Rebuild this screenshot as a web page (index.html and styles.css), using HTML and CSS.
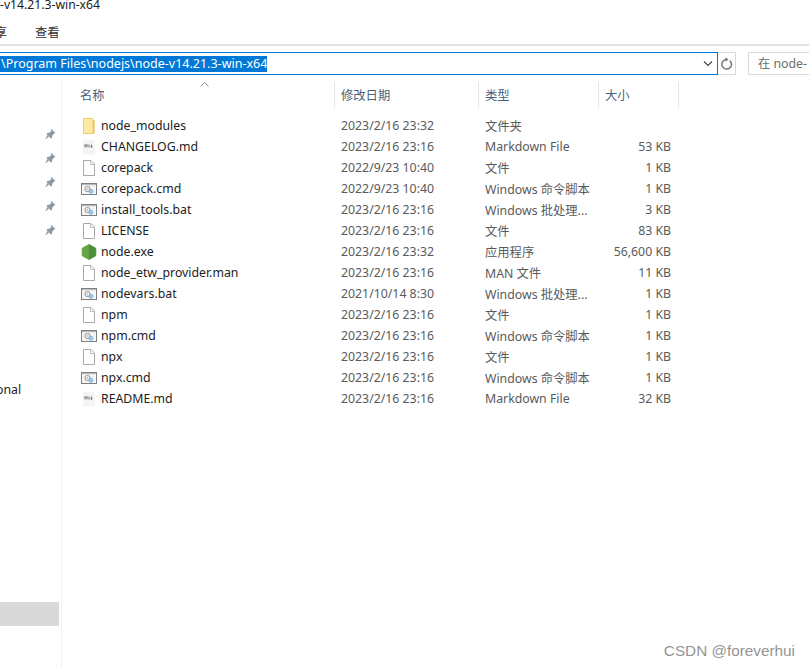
FILE: index.html
```html
<!DOCTYPE html>
<html lang="zh-CN">
<head>
  <meta charset="utf-8">
  <title>node-v14.21.3-win-x64</title>
  <link rel="stylesheet" href="styles.css">
</head>
<body>

<svg class="defs" width="0" height="0">
  <symbol id="i-folder" viewBox="0 0 16 16">
    <path d="M2.500 .5h9l1.500 1.500v13.500h-10.500z" fill="#fde9a2" stroke="#eccf6e"/>
    <path d="M12.500 2v13" stroke="#e6c04f" stroke-width="1.500"/>
  </symbol>
  <symbol id="i-file" viewBox="0 0 16 16">
    <path d="M2.500 .5h7.500l3.500 3.500v11.500h-11z" fill="#fff" stroke="#a9a9a9"/>
    <path d="M9.500 .5v4h4" fill="none" stroke="#bdbdbd"/>
  </symbol>
  <symbol id="i-md" viewBox="0 0 16 16">
    <path d="M2 .5h10l2 2v13h-12z" fill="#f4f4f4"/>
    <path d="M4 8.500v-3l1 1.500 1-1.500v3M8 5.500v3M10.500 5.500v3M9.500 7.500l1 1 1-1" fill="none" stroke="#777"/>
  </symbol>
  <symbol id="i-bat" viewBox="0 0 16 16">
    <rect x=".5" y="2.500" width="15" height="11" fill="#f6f6f6" stroke="#808080"/>
    <path d="M1 3h14v1.200h-14z" fill="#b9b9b9"/>
    <circle cx="6.500" cy="8" r="2.500" fill="none" stroke="#a5a5a5" stroke-width="1.200"/>
    <circle cx="6.500" cy="8" r=".8" fill="#a5a5a5"/>
    <circle cx="10" cy="10.300" r="2" fill="#9fcdee" stroke="#6aa8d6" stroke-width=".7"/>
  </symbol>
  <symbol id="i-node" viewBox="0 0 16 16">
    <path d="M8 .5l6.800 3.800v7.400l-6.800 3.800-6.800-3.800v-7.400z" fill="#66a548" stroke="#66a548" stroke-linejoin="round"/>
    <path d="M8 .5l6.800 3.800v7.400l-6.800 3.800z" fill="#4a8f39"/>
  </symbol>
  <symbol id="i-pin" viewBox="0 0 12 12">
    <path d="M7 .5l4.500 4.500-1.300.6-2 2.100-.2 2.300-1 .5-4.500-4.500.5-1 2.300-.2 2.100-2z" fill="#8d99a3"/>
    <path d="M3.500 7l1.500 1.500-4.200 3.200z" fill="#8d99a3"/>
  </symbol>
</svg>

<div class="title">-v14.21.3-win-x64</div>

<div class="tabs">
  <span class="tab-share">享</span>
  <span class="tab">查看</span>
</div>

<div class="addr-row">
  <div class="addr">
    <span class="selected">\Program Files\nodejs\node-v14.21.3-win-x64</span>
    <svg class="chev" width="10" height="6" viewBox="0 0 10 6"><path d="M1 .5l4 4 4-4" fill="none" stroke="#444" stroke-width="1.200"/></svg>
  </div>
  <div class="refresh">
    <svg width="12" height="14" viewBox="0 0 12 14"><path d="M8.800 3.600a4.800 4.800 0 1 1-3.500-1.100" fill="none" stroke="#777" stroke-width="1.500"/><path d="M4.500 .3v4.500l3-2.200z" fill="#777"/></svg>
  </div>
  <div class="search">在 node-</div>
</div>

<div class="content">
  <div class="side">
    <div class="pins">
      <svg class="pin"><use href="#i-pin"/></svg>
      <svg class="pin"><use href="#i-pin"/></svg>
      <svg class="pin"><use href="#i-pin"/></svg>
      <svg class="pin"><use href="#i-pin"/></svg>
      <svg class="pin"><use href="#i-pin"/></svg>
    </div>
    <div class="side-label">onal</div>
    <div class="side-sel"></div>
  </div>

  <div class="main">
    <div class="sort"><svg width="9" height="5" viewBox="0 0 9 5"><path d="M.5 4.500l4-4 4 4" fill="none" stroke="#8a8a8a"/></svg></div>
    <div class="head">
      <div class="hcol c-name">名称</div>
      <div class="hcol c-date">修改日期</div>
      <div class="hcol c-type">类型</div>
      <div class="hcol c-size">大小</div>
    </div>

    <div class="row"><svg class="ico"><use href="#i-folder"/></svg><span class="c-name name">node_modules</span><span class="c-date">2023/2/16 23:32</span><span class="c-type">文件夹</span><span class="c-size"></span></div>
    <div class="row"><svg class="ico"><use href="#i-md"/></svg><span class="c-name name">CHANGELOG.md</span><span class="c-date">2023/2/16 23:16</span><span class="c-type">Markdown File</span><span class="c-size">53 KB</span></div>
    <div class="row"><svg class="ico"><use href="#i-file"/></svg><span class="c-name name">corepack</span><span class="c-date">2022/9/23 10:40</span><span class="c-type">文件</span><span class="c-size">1 KB</span></div>
    <div class="row"><svg class="ico"><use href="#i-bat"/></svg><span class="c-name name">corepack.cmd</span><span class="c-date">2022/9/23 10:40</span><span class="c-type">Windows 命令脚本</span><span class="c-size">1 KB</span></div>
    <div class="row"><svg class="ico"><use href="#i-bat"/></svg><span class="c-name name">install_tools.bat</span><span class="c-date">2023/2/16 23:16</span><span class="c-type">Windows 批处理...</span><span class="c-size">3 KB</span></div>
    <div class="row"><svg class="ico"><use href="#i-file"/></svg><span class="c-name name">LICENSE</span><span class="c-date">2023/2/16 23:16</span><span class="c-type">文件</span><span class="c-size">83 KB</span></div>
    <div class="row"><svg class="ico"><use href="#i-node"/></svg><span class="c-name name">node.exe</span><span class="c-date">2023/2/16 23:32</span><span class="c-type">应用程序</span><span class="c-size">56,600 KB</span></div>
    <div class="row"><svg class="ico"><use href="#i-file"/></svg><span class="c-name name">node_etw_provider.man</span><span class="c-date">2023/2/16 23:16</span><span class="c-type">MAN 文件</span><span class="c-size">11 KB</span></div>
    <div class="row"><svg class="ico"><use href="#i-bat"/></svg><span class="c-name name">nodevars.bat</span><span class="c-date">2021/10/14 8:30</span><span class="c-type">Windows 批处理...</span><span class="c-size">1 KB</span></div>
    <div class="row"><svg class="ico"><use href="#i-file"/></svg><span class="c-name name">npm</span><span class="c-date">2023/2/16 23:16</span><span class="c-type">文件</span><span class="c-size">1 KB</span></div>
    <div class="row"><svg class="ico"><use href="#i-bat"/></svg><span class="c-name name">npm.cmd</span><span class="c-date">2023/2/16 23:16</span><span class="c-type">Windows 命令脚本</span><span class="c-size">1 KB</span></div>
    <div class="row"><svg class="ico"><use href="#i-file"/></svg><span class="c-name name">npx</span><span class="c-date">2023/2/16 23:16</span><span class="c-type">文件</span><span class="c-size">1 KB</span></div>
    <div class="row"><svg class="ico"><use href="#i-bat"/></svg><span class="c-name name">npx.cmd</span><span class="c-date">2023/2/16 23:16</span><span class="c-type">Windows 命令脚本</span><span class="c-size">1 KB</span></div>
    <div class="row"><svg class="ico"><use href="#i-md"/></svg><span class="c-name name">README.md</span><span class="c-date">2023/2/16 23:16</span><span class="c-type">Markdown File</span><span class="c-size">32 KB</span></div>
  </div>
</div>

<div class="mark">CSDN @foreverhui</div>

</body>
</html>
```

FILE: styles.css
```css
html, body {
  margin: 0;
  height: 100%;
  background-color: #fff;
}

body {
  position: relative;
  width: 809px;
  height: 667px;
  overflow: hidden;
  font-family: "Noto Sans", "Noto Sans CJK SC", sans-serif;
  font-size: 12.3px;
  color: #1c1c1c;
}

.defs {
  position: absolute;
}

.title {
  height: 12px;
  line-height: 9px;
  font-size: 12.2px;
}

.tabs {
  display: flex;
  height: 34px;
  padding-top: 14px;
  box-sizing: border-box;
  line-height: 14px;
  border-bottom: 2px solid #e3e3e3;
  color: #333;
}

.tab {
  margin-left: 28px;
}

.tab-share {
  width: 7px;
  margin-left: 0;
  direction: rtl;
  overflow: hidden;
}

.addr-row {
  display: flex;
  margin-top: 6px;
  height: 23px;
}

.addr {
  flex: none;
  display: flex;
  align-items: center;
  justify-content: space-between;
  width: 718px;
  box-sizing: border-box;
  border: 1px solid #0078d7;
  border-left: none;
  padding-right: 4px;
}

.selected {
  line-height: 16px;
  padding-left: 1px;
  font-size: 12.5px;
  white-space: nowrap;
  background-color: #0078d7;
  color: #fff;
}

.refresh {
  flex: none;
  display: flex;
  align-items: center;
  justify-content: center;
  width: 18px;
  padding-left: 1px;
  box-sizing: border-box;
  border: 1px solid #d9d9d9;
  border-left: none;
}

.search {
  flex: 1;
  min-width: 0;
  margin-left: 12px;
  box-sizing: border-box;
  border: 1px solid #d9d9d9;
  border-right: none;
  padding-left: 9px;
  line-height: 21px;
  white-space: nowrap;
  color: #6d6d6d;
}

.content {
  display: flex;
  margin-top: 7px;
  height: 585px;
}

.side {
  width: 61px;
  flex: none;
  border-right: 1px solid #f0f0f0;
}

.pins {
  display: flex;
  flex-direction: column;
  align-items: flex-end;
  gap: 12px;
  padding: 46px 5px 0 0;
}

.pin {
  width: 12px;
  height: 12px;
}

.side-label {
  margin-top: 146px;
  text-indent: -4px;
  line-height: 16px;
  white-space: nowrap;
}

.side-sel {
  margin-top: 204px;
  width: 59px;
  height: 24px;
  background-color: #d9d9d9;
}

.main {
  position: relative;
  flex: 1;
}

.sort {
  position: absolute;
  left: 138px;
  top: 0;
  line-height: 0;
}

.head {
  display: flex;
  height: 26px;
  margin-bottom: 7px;
  color: #4c607a;
}

.hcol {
  box-sizing: border-box;
  height: 26px;
  line-height: 28px;
  border-right: 1px solid #e5e5e5;
}

.c-name {
  width: 273px;
  flex: none;
  box-sizing: border-box;
}

.head .c-name {
  padding-left: 18px;
}

.c-date {
  width: 144px;
  flex: none;
  box-sizing: border-box;
  padding-left: 6px;
}

.c-type {
  width: 120px;
  flex: none;
  box-sizing: border-box;
  padding-left: 6px;
}

.c-size {
  width: 80px;
  flex: none;
  box-sizing: border-box;
  padding-left: 6px;
}

.row {
  display: flex;
  align-items: center;
  height: 21px;
  color: #5a5a5a;
  white-space: nowrap;
}

.ico {
  flex: none;
  width: 16px;
  height: 16px;
  margin-left: 19px;
  margin-right: 4px;
}

.row .c-name {
  width: 234px;
  color: #1c1c1c;
}

.row .c-size {
  width: 72px;
  padding: 0;
  text-align: right;
}

.mark {
  position: absolute;
  right: 14px;
  top: 643px;
  font-family: "Liberation Sans", sans-serif;
  font-size: 15.3px;
  line-height: 16px;
  color: #949494;
}
```
